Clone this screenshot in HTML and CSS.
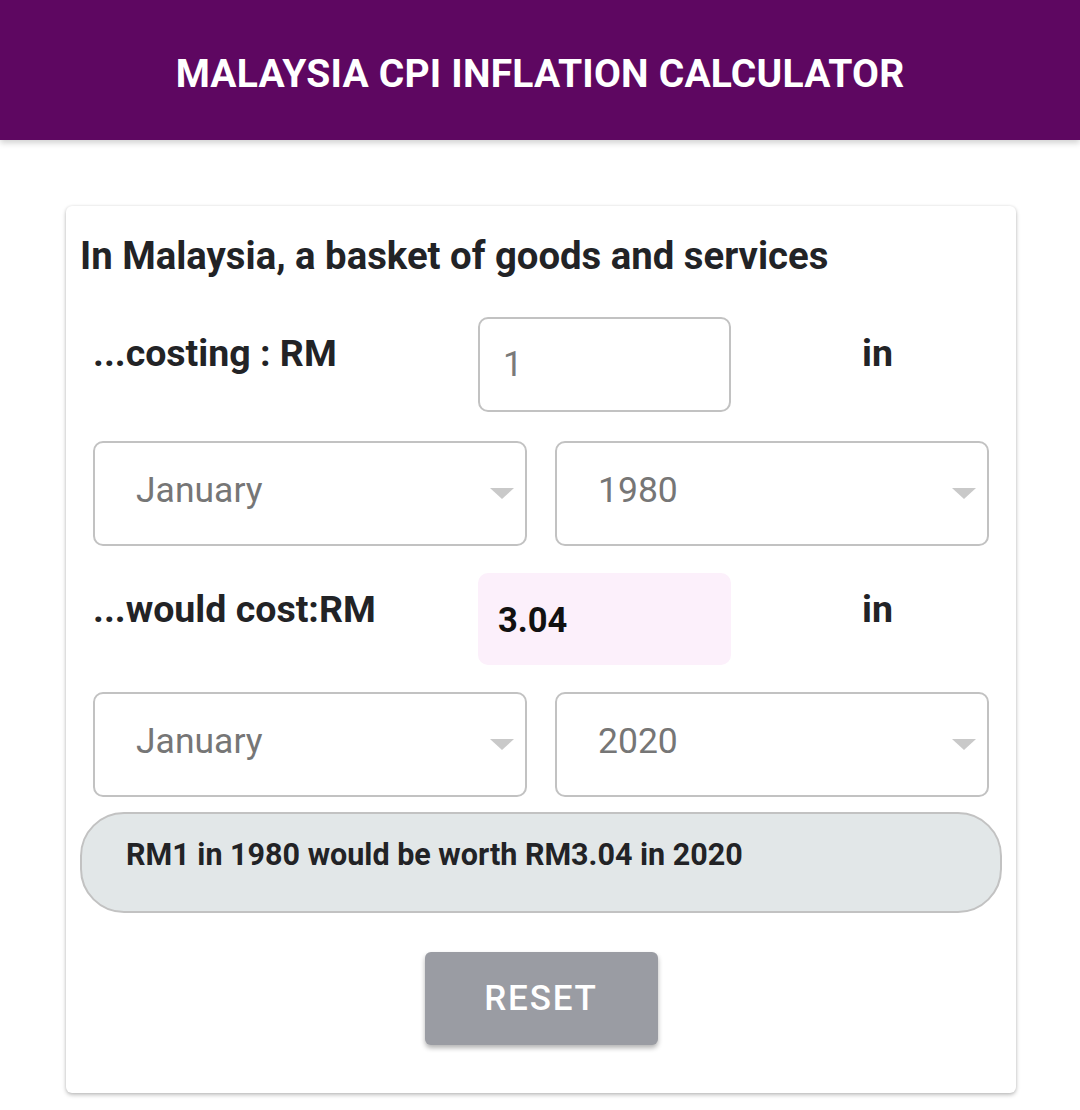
FILE: index.html
```html
<!DOCTYPE html>
<html lang="en">
  <head>
    <meta charset="UTF-8" />
    <meta name="viewport" content="width=device-width, initial-scale=1.0" />
    <title>Malaysia CPI Inflation Calculator</title>
    <link rel="stylesheet" href="styles.css">
  </head>
  <body>
    <header class="top_bar">
      <h1 class="top_title">MALAYSIA CPI INFLATION CALCULATOR</h1>
    </header>

    <div class="page">
      <div class="card">
        <h2 class="card_title">In Malaysia, a basket of goods and services</h2>

        <div class="amount_row">
          <span class="label">...costing : RM</span>
          <input class="amount_input" type="text" value="1" />
          <span class="label in_word">in</span>
        </div>

        <div class="select_row">
          <div class="select_box">
            <span class="select_value">January</span>
            <span class="arrow"></span>
          </div>
          <div class="select_box">
            <span class="select_value">1980</span>
            <span class="arrow"></span>
          </div>
        </div>

        <div class="amount_row result_row">
          <span class="label">...would cost:RM</span>
          <div class="amount_output">3.04</div>
          <span class="label in_word">in</span>
        </div>

        <div class="select_row second_select">
          <div class="select_box">
            <span class="select_value">January</span>
            <span class="arrow"></span>
          </div>
          <div class="select_box">
            <span class="select_value">2020</span>
            <span class="arrow"></span>
          </div>
        </div>

        <div class="summary">RM1 in 1980 would be worth RM3.04 in 2020</div>

        <div class="button_wrap">
          <button class="reset_button" type="button">RESET</button>
        </div>
      </div>
    </div>
  </body>
</html>
```

FILE: styles.css
```css
body {
  margin: 0;
  background: #ffffff;
  font-family: Roboto, "Noto Sans", Arial, sans-serif;
  color: #222326;
}
.top_bar {
  box-sizing: border-box;
  height: 140px;
  padding-top: 8px;
  background: #5e0761;
  display: flex;
  align-items: center;
  justify-content: center;
  box-shadow: 0 3px 6px rgba(0, 0, 0, 0.18);
}
.top_title {
  margin: 0;
  color: #ffffff;
  font-size: 39px;
  font-weight: 700;
  letter-spacing: 0.2px;
}
.page {
  padding: 66px 64px 16px 66px;
}
.card {
  background: #ffffff;
  border-radius: 6px;
  box-shadow: 0 2px 4px rgba(0, 0, 0, 0.25), 0 0 3px rgba(0, 0, 0, 0.08);
  padding: 26px 14px 48px 14px;
}
.card_title {
  margin: 0;
  font-size: 38.3px;
  font-weight: 700;
  line-height: 48px;
}
.amount_row {
  display: grid;
  grid-template-columns: 385px 253px 1fr;
  align-items: start;
  margin: 37px 0 0 13px;
}
.result_row {
  margin-top: 27px;
}
.label {
  font-size: 37.5px;
  font-weight: 700;
  line-height: 46px;
  padding-top: 13px;
}
.in_word {
  padding-left: 131px;
}
.amount_input {
  box-sizing: border-box;
  width: 253px;
  height: 95px;
  border: 2px solid #c2c2c2;
  border-radius: 10px;
  padding: 0 0 0 23px;
  font-family: Roboto, "Noto Sans", Arial, sans-serif;
  font-size: 35px;
  color: #7a7a7a;
  outline: none;
}
.amount_output {
  box-sizing: border-box;
  height: 92px;
  background: #fcf0fb;
  border-radius: 10px;
  padding: 27px 0 0 20px;
  font-size: 34.5px;
  font-weight: 700;
  color: #111111;
}
.select_row {
  display: grid;
  grid-template-columns: 1fr 1fr;
  gap: 28px;
  margin: 29px 13px 0 13px;
}
.second_select {
  margin-top: 27px;
}
.select_box {
  box-sizing: border-box;
  height: 105px;
  border: 2px solid #c2c2c2;
  border-radius: 10px;
  display: flex;
  align-items: center;
  justify-content: space-between;
  padding: 0 11px 8px 41px;
}
.select_value {
  font-size: 35.5px;
  color: #767676;
}
.arrow {
  width: 0;
  height: 0;
  margin-top: 8px;
  border-left: 12px solid transparent;
  border-right: 12px solid transparent;
  border-top: 11px solid #c9c9c9;
}
.summary {
  box-sizing: border-box;
  height: 101px;
  margin-top: 15px;
  background: #e2e7e8;
  border: 2px solid #c2c2c2;
  border-radius: 44px;
  padding: 23px 0 0 44px;
  font-size: 30.5px;
  font-weight: 700;
  color: #222326;
}
.button_wrap {
  display: flex;
  justify-content: center;
  margin-top: 39px;
}
.reset_button {
  width: 233px;
  height: 93px;
  border: none;
  border-radius: 6px;
  background: #9a9ca3;
  color: #ffffff;
  font-family: Roboto, "Noto Sans", Arial, sans-serif;
  font-size: 35px;
  font-weight: 500;
  letter-spacing: 1.8px;
  box-shadow: 0 3px 5px rgba(0, 0, 0, 0.3);
}
```
